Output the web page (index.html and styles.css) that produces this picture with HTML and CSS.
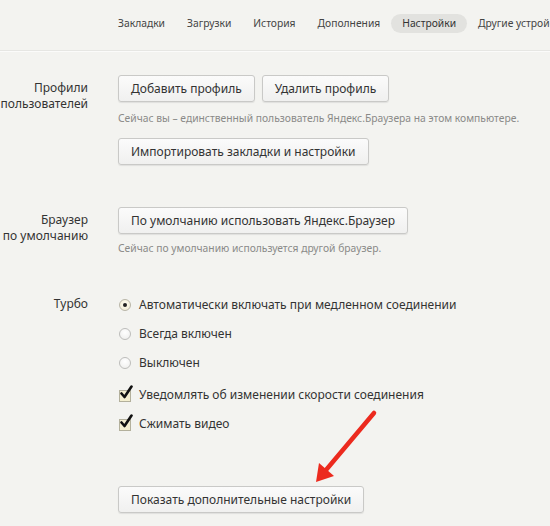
FILE: index.html
```html
<!DOCTYPE html>
<html lang="ru">
<head>
<meta charset="utf-8">
<link rel="stylesheet" href="styles.css">
</head>
<body>
<header class="topbar">
  <nav class="nav">
    <span class="nav-item">Закладки</span>
    <span class="nav-item">Загрузки</span>
    <span class="nav-item">История</span>
    <span class="nav-item">Дополнения</span>
    <span class="nav-item active">Настройки</span>
    <span class="nav-item">Другие устройства</span>
  </nav>
</header>
<main class="settings">
  <section class="row row-profiles">
    <div class="label"><span>Профили</span><span>пользователей</span></div>
    <div class="content">
      <div class="btn-line">
        <button class="btn">Добавить профиль</button>
        <button class="btn">Удалить профиль</button>
      </div>
      <p class="hint">Сейчас вы – единственный пользователь Яндекс.Браузера на этом компьютере.</p>
      <div class="btn-line import-line">
        <button class="btn">Импортировать закладки и настройки</button>
      </div>
    </div>
  </section>
  <section class="row row-default">
    <div class="label"><span>Браузер</span><span>по умолчанию</span></div>
    <div class="content">
      <div class="btn-line">
        <button class="btn">По умолчанию использовать Яндекс.Браузер</button>
      </div>
      <p class="hint hint-2">Сейчас по умолчанию используется другой браузер.</p>
    </div>
  </section>
  <section class="row row-turbo">
    <div class="label label-turbo"><span>Турбо</span></div>
    <div class="content">
      <div class="option"><span class="radio checked"></span>Автоматически включать при медленном соединении</div>
      <div class="option"><span class="radio"></span>Всегда включен</div>
      <div class="option"><span class="radio"></span>Выключен</div>
      <div class="option check-first"><span class="check"><svg width="14" height="16" viewBox="0 0 14 16"><path d="M2.5 8.5 L5.5 12 L12.5 1.5" fill="none" stroke="#111" stroke-width="2.6" stroke-linecap="round" stroke-linejoin="round"/></svg></span>Уведомлять об изменении скорости соединения</div>
      <div class="option"><span class="check"><svg width="14" height="16" viewBox="0 0 14 16"><path d="M2.5 8.5 L5.5 12 L12.5 1.5" fill="none" stroke="#111" stroke-width="2.6" stroke-linecap="round" stroke-linejoin="round"/></svg></span>Сжимать видео</div>
    </div>
  </section>
  <section class="row row-more">
    <div class="label"></div>
    <div class="content">
      <button class="btn">Показать дополнительные настройки</button>
    </div>
  </section>
</main>
<svg class="arrow" width="550" height="526" viewBox="0 0 550 526">
  <line x1="374" y1="413" x2="326" y2="470" stroke="#ec2a1e" stroke-width="4.5" stroke-linecap="round"/>
  <polygon points="316,482 319,463 334,476" fill="#ec2a1e"/>
</svg>
</body>
</html>
```
FILE: styles.css
```css
* { box-sizing: border-box; }
html, body { margin: 0; padding: 0; }
body {
  background: #f3f3f0;
  font-family: "Noto Sans", "Open Sans", sans-serif;
  color: #333;
  width: 550px;
  height: 526px;
  overflow: hidden;
  position: relative;
}
.topbar {
  height: 51px;
  border-bottom: 1px solid #e6e6e3;
  box-shadow: 0 1px 0 #fbfbfa;
  overflow: hidden;
}
.nav {
  display: flex;
  gap: 0;
  padding: 14px 0 0 107px;
  white-space: nowrap;
}
.nav-item {
  font-size: 10.3px;
  line-height: 19px;
  height: 19px;
  padding: 0 11px;
  color: #444;
  border-radius: 10px;
  flex-shrink: 0;
}
.nav-item.active {
  background: #e2e2df;
  color: #333;
}
.settings {
  padding-top: 24px;
}
.row {
  display: grid;
  grid-template-columns: 88px 1fr;
  column-gap: 30px;
}
.label {
  font-size: 12px;
  line-height: 16px;
  padding-top: 5px;
  color: #333;
  white-space: nowrap;
  display: flex;
  flex-direction: column;
  align-items: flex-end;
  text-align: right;
}
.btn-line {
  display: flex;
  gap: 7px;
}
.btn {
  font-family: inherit;
  font-size: 12px;
  height: 27px;
  padding: 0 12px;
  color: #333;
  background: linear-gradient(#fbfbfb, #f0f0ef);
  border: 1px solid #c9c9c7;
  border-radius: 3px;
  box-shadow: 0 1px 1px rgba(0,0,0,0.08);
}
.hint {
  margin: 9px 0 0;
  font-size: 10.3px;
  line-height: 14px;
  color: #8a8a88;
  white-space: nowrap;
}
.import-line { margin-top: 13px; }
.row-default { margin-top: 42px; }
.hint-2 { margin-top: 7px; }
.row-turbo { margin-top: 35px; }
.label-turbo { padding-top: 6px; }
.option {
  display: flex;
  align-items: center;
  height: 29px;
  font-size: 12px;
  color: #333;
  white-space: nowrap;
}
.check-first { margin-top: 3px; }
.radio {
  width: 12px;
  height: 12px;
  margin: 0 8px 0 1px;
  border-radius: 50%;
  border: 1px solid #bdbdbb;
  background: radial-gradient(circle at 50% 35%, #ffffff, #ececea);
  position: relative;
  flex-shrink: 0;
}
.radio.checked {
  background: radial-gradient(circle at 50% 40%, #fffdf0, #efe9cf);
  border-color: #b9b6a8;
}
.radio.checked::after {
  content: "";
  position: absolute;
  left: 3px;
  top: 3px;
  width: 4px;
  height: 4px;
  border-radius: 50%;
  background: #222;
}
.check {
  position: relative;
  width: 12px;
  height: 12px;
  margin: 2px 8px 0 1px;
  border: 1px solid #b3b09c;
  background: #f4efd0;
  flex-shrink: 0;
}
.check svg {
  position: absolute;
  left: -1px;
  top: -6px;
}
.row-more { margin-top: 48px; }
.arrow {
  position: absolute;
  left: 0;
  top: 0;
  pointer-events: none;
}
```
